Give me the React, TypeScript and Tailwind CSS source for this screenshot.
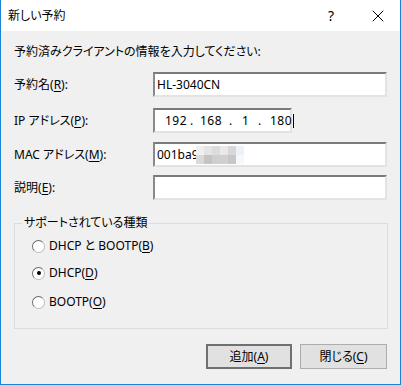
import { X } from "lucide-react";

function Accel({ text, k }: { text: string; k: string }) {
  // label with underlined accelerator letter, e.g. 予約名(R):
  return (
    <span className="whitespace-nowrap">
      {text}(<span className="underline underline-offset-2">{k}</span>)
    </span>
  );
}

function Field({ children, w = "w-[234px]" }: { children?: React.ReactNode; w?: string }) {
  return (
    <div
      className={`${w} h-[25px] flex items-center bg-white border-2 border-t-[#7a7a7a] border-l-[#8a8a8a] border-r-[#e3e3e3] border-b-[#e3e3e3] pl-[2px]`}
    >
      {children}
    </div>
  );
}

function Radio({ checked, children }: { checked?: boolean; children: React.ReactNode }) {
  return (
    <div className="flex items-center h-[16px]">
      <span className="w-[13px] h-[13px] rounded-full bg-white border border-t-[#6d6d6d] border-l-[#6d6d6d] border-r-[#bdbdbd] border-b-[#bdbdbd] flex items-center justify-center">
        {checked && <span className="w-[4px] h-[4px] rounded-full bg-black" />}
      </span>
      <span className="ml-[4px]">{children}</span>
    </div>
  );
}

export default function App() {
  return (
    <div className="w-[401px] h-[385px] flex flex-col bg-[#f0f0f0] border-l border-r border-b border-[#1883d7] text-[12px] leading-[16px] text-black font-['Noto_Sans','Noto_Sans_CJK_JP',sans-serif] [font-feature-settings:'palt']">
      <div className="h-[31px] bg-white flex items-center pl-[7px]">
        <span className="flex-1">新しい予約</span>
        <span className="w-[14px] text-center text-[14px] mr-[30px]">?</span>
        <X size={20} strokeWidth={1.2} className="mr-[12px]" />
      </div>

      <div className="pl-[13px] pr-[13px] flex flex-col">
        <div className="mt-[13px]">予約済みクライアントの情報を入力してください:</div>

        <div className="flex items-center mt-[12px]">
          <div className="w-[139px]"><Accel text="予約名" k="R" />:</div>
          <Field>
            <span>HL-3040CN</span>
          </Field>
        </div>

        <div className="flex items-center mt-[11px]">
          <div className="w-[139px]"><Accel text="IP アドレス" k="P" />:</div>
          <Field w="w-[139px]">
            <div className="flex items-center pl-[8px] tracking-[0.5px]">
              <span className="w-[25px]">192</span>
              <span className="w-[10px]">.</span>
              <span className="w-[29px]">168</span>
              <span className="w-[13px]">.</span>
              <span className="w-[16px]">1</span>
              <span className="w-[12px]">.</span>
              <span>180</span>
              <span className="w-px h-[14px] bg-black ml-px" />
            </div>
          </Field>
        </div>

        <div className="flex items-center mt-[9px]">
          <div className="w-[139px]"><Accel text="MAC アドレス" k="M" />:</div>
          <Field>
            <span>001ba9</span>
            <div className="grid grid-cols-6 -ml-[3px]">
              <span className="w-[8px] h-[9px] bg-[#f0f0f0]" />
              <span className="w-[8px] h-[9px] bg-[#e4e4e4]" />
              <span className="w-[8px] h-[9px] bg-[#dcdcdc]" />
              <span className="w-[8px] h-[9px] bg-[#e9e9e9]" />
              <span className="w-[8px] h-[9px] bg-[#d7d7d7]" />
              <span className="w-[8px] h-[9px] bg-[#eef2f6]" />
              <span className="w-[8px] h-[9px] bg-[#d9d9d9]" />
              <span className="w-[8px] h-[9px] bg-[#c9c3bf]" />
              <span className="w-[8px] h-[9px] bg-[#cfcfcf]" />
              <span className="w-[8px] h-[9px] bg-[#d0d0d0]" />
              <span className="w-[8px] h-[9px] bg-[#c7c7c7]" />
              <span className="w-[8px] h-[9px] bg-[#f6f9fb]" />
            </div>
          </Field>
        </div>

        <div className="flex items-center mt-[8px]">
          <div className="w-[139px]"><Accel text="説明" k="E" />:</div>
          <Field />
        </div>

        <fieldset className="mt-[15px] h-[114px] w-[374px] border border-[#dcdcdc] pl-[17px]">
          <legend className="ml-[-10px] px-[2px]">サポートされている種類</legend>
          <div className="flex flex-col mt-[7px]">
            <Radio>
              DHCP と BOOTP(<span className="underline underline-offset-2">B</span>)
            </Radio>
            <div className="mt-[11px]">
              <Radio checked>
                DHCP(<span className="underline underline-offset-2">D</span>)
              </Radio>
            </div>
            <div className="mt-[13px]">
              <Radio>
                BOOTP(<span className="underline underline-offset-2">O</span>)
              </Radio>
            </div>
          </div>
        </fieldset>

        <div className="flex justify-end gap-[8px] mt-[15px]">
          <button className="w-[86px] h-[25px] bg-[#e1e1e1] border-2 border-[#707070]">
            <Accel text="追加" k="A" />
          </button>
          <button className="w-[87px] h-[25px] bg-[#e1e1e1] border border-[#adadad]">
            <Accel text="閉じる" k="C" />
          </button>
        </div>
      </div>
    </div>
  );
}
